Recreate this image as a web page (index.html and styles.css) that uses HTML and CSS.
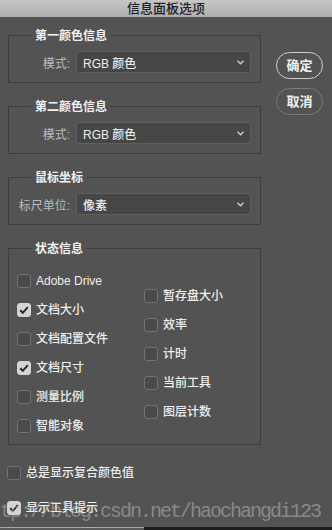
FILE: index.html
```html
<!DOCTYPE html>
<html lang="zh-CN">
<head>
<meta charset="utf-8">
<title>信息面板选项</title>
<link rel="stylesheet" href="styles.css">
</head>
<body>

<div class="dialog">
  <div class="titlebar">信息面板选项</div>

  <div class="main">
    <div class="groups">

      <div class="group">
        <div class="legend">第一颜色信息</div>
        <div class="field">
          <span class="field-label">模式:</span>
          <div class="select">RGB 颜色
            <svg class="chev" width="7" height="5" viewBox="0 0 7 5"><polyline points="0.5,0.8 3.5,3.8 6.5,0.8" fill="none" stroke="#cfcfcf" stroke-width="1.3"/></svg>
          </div>
        </div>
      </div>

      <div class="group">
        <div class="legend">第二颜色信息</div>
        <div class="field">
          <span class="field-label">模式:</span>
          <div class="select">RGB 颜色
            <svg class="chev" width="7" height="5" viewBox="0 0 7 5"><polyline points="0.5,0.8 3.5,3.8 6.5,0.8" fill="none" stroke="#cfcfcf" stroke-width="1.3"/></svg>
          </div>
        </div>
      </div>

      <div class="group group-3">
        <div class="legend">鼠标坐标</div>
        <div class="field">
          <span class="field-label">标尺单位:</span>
          <div class="select">像素
            <svg class="chev" width="7" height="5" viewBox="0 0 7 5"><polyline points="0.5,0.8 3.5,3.8 6.5,0.8" fill="none" stroke="#cfcfcf" stroke-width="1.3"/></svg>
          </div>
        </div>
      </div>

      <div class="group">
        <div class="legend">状态信息</div>
        <div class="status">
          <div class="col">
            <label class="check"><span class="box"></span>Adobe Drive</label>
            <label class="check"><span class="box on"><svg width="14" height="14" viewBox="0 0 14 14"><polyline points="3.2,7.2 5.8,9.8 10.8,4.2" fill="none" stroke="#2b2b2b" stroke-width="2"/></svg></span>文档大小</label>
            <label class="check"><span class="box"></span>文档配置文件</label>
            <label class="check"><span class="box on"><svg width="14" height="14" viewBox="0 0 14 14"><polyline points="3.2,7.2 5.8,9.8 10.8,4.2" fill="none" stroke="#2b2b2b" stroke-width="2"/></svg></span>文档尺寸</label>
            <label class="check"><span class="box"></span>测量比例</label>
            <label class="check"><span class="box"></span>智能对象</label>
          </div>
          <div class="col col-right">
            <label class="check"><span class="box"></span>暂存盘大小</label>
            <label class="check"><span class="box"></span>效率</label>
            <label class="check"><span class="box"></span>计时</label>
            <label class="check"><span class="box"></span>当前工具</label>
            <label class="check"><span class="box"></span>图层计数</label>
          </div>
        </div>
      </div>

    </div>

    <div class="buttons">
      <div class="btn btn-ok">确定</div>
      <div class="btn">取消</div>
    </div>
  </div>

  <div class="extra">
    <label class="check"><span class="box"></span>总是显示复合颜色值</label>
    <label class="check"><span class="box on"><svg width="14" height="14" viewBox="0 0 14 14"><polyline points="3.2,7.2 5.8,9.8 10.8,4.2" fill="none" stroke="#2b2b2b" stroke-width="2"/></svg></span>显示工具提示</label>
  </div>

  <div class="watermark">http://blog.csdn.net/haochangdi123</div>
</div>
<div class="edge"><span class="edge-left"></span></div>

</body>
</html>
```

FILE: styles.css
```css
body, html{
	margin:0px;
	padding:0px;
	background:#535353;
	font-family:"Liberation Sans", "Noto Sans CJK SC", sans-serif;
	font-size:12px;
	color:#e6e6e6;
}
.dialog{
	position:relative;
	width:332px;
	height:527px;
	background:#535353;
	overflow:hidden;
}
.titlebar{
	height:17px;
	line-height:17px;
	text-align:center;
	font-size:13px;
	font-weight:500;
	color:#222;
	background:linear-gradient(#c6c6c6, #afafaf);
}
.main{
	display:flex;
	padding-top:18px;
}
.groups{
	margin-left:8px;
	width:253px;
}
.group{
	border:1px solid #3d3d3d;
	padding:0 9px 9px 8px;
	margin-bottom:23px;
}
.group-3{
	margin-top:1px;
}
.legend{
	display:table;
	margin:-8px 0 0 14px;
	padding:0 4px;
	line-height:16px;
	background:#535353;
	color:#f2f2f2;
	font-weight:bold;
}
.field{
	display:flex;
	align-items:center;
	margin-top:7px;
}
.field-label{
	width:53px;
	margin-right:6px;
	text-align:right;
	color:#bcbcbc;
	white-space:nowrap;
}
.select{
	box-sizing:border-box;
	display:flex;
	align-items:center;
	width:175px;
	height:22px;
	padding:0 0 0 6px;
	background:#464646;
	border:1px solid #5f5f5f;
	border-radius:3px;
	color:#ececec;
	font-weight:500;
}
.chev{
	margin-left:auto;
	margin-right:6px;
}
.status{
	display:grid;
	grid-template-columns:127px 1fr;
	margin-top:17px;
	padding-bottom:2px;
}
.col{
	display:flex;
	flex-direction:column;
	gap:15px;
}
.col-right{
	padding-top:15px;
}
.check{
	display:flex;
	align-items:center;
	gap:5px;
	height:14px;
	line-height:14px;
	color:#eeeeee;
	font-weight:500;
	white-space:nowrap;
}
.box{
	box-sizing:border-box;
	width:14px;
	height:14px;
	flex:none;
	border:1px solid #727272;
	border-radius:3px;
	background:#4a4a4a;
}
.box.on{
	border-color:#d4d4d4;
	background:#d4d4d4;
}
.box svg{
	display:block;
	margin:-1px;
}
.buttons{
	margin-left:15px;
	padding-top:17px;
	display:flex;
	flex-direction:column;
	gap:9px;
}
.btn{
	box-sizing:border-box;
	width:47px;
	height:27px;
	line-height:25px;
	text-align:center;
	border:1px solid #7a7a7a;
	border-radius:14px;
	font-size:13px;
	font-weight:bold;
	color:#f0f0f0;
}
.btn-ok{
	border:1.5px solid #cfcfcf;
}
.extra{
	padding-left:7px;
	display:flex;
	flex-direction:column;
	gap:21px;
	margin-top:-2px;
}
.watermark{
	position:absolute;
	left:-20px;
	top:502px;
	font-family:"Liberation Mono", monospace;
	font-size:20px;
	line-height:20px;
	letter-spacing:-2px;
	color:rgba(205,205,205,0.45);
	white-space:nowrap;
	pointer-events:none;
}
.edge{
	display:flex;
	height:3px;
	background:#1c1c1c;
}
.edge-left{
	width:144px;
	border-top:1px solid #a8a8a8;
	background:#5a5a5a;
}
```
